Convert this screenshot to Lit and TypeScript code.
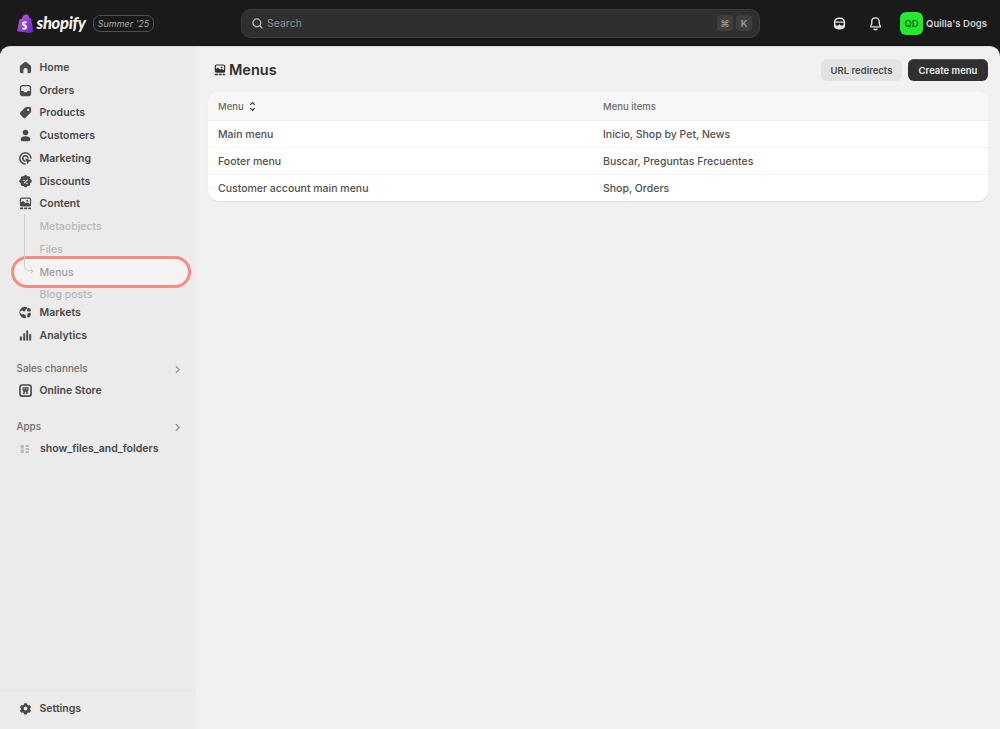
import { LitElement, html, css, svg } from "lit";
import { customElement } from "lit/decorators.js";

const icon = (body: unknown, cls = "ic") => html`<svg class=${cls} viewBox="0 0 20 20" aria-hidden="true">${body}</svg>`;

const contentIcon = svg`<path fill-rule="evenodd" d="M5 2h10a2.500 2.500 0 0 1 2.500 2.500v7A2.500 2.500 0 0 1 15 14H5a2.500 2.500 0 0 1-2.500-2.500v-7A2.500 2.500 0 0 1 5 2ZM4.200 4.500v3.900l2.600-1.900 3.400 3 1.800-1.300 3.800 2.300V4.500c0-.5-.4-.8-.8-.8H5c-.5 0-.8.3-.8.8Z"/><circle cx="12.400" cy="6.200" r="1.300"/><rect x="2.500" y="15.300" width="4.500" height="2.200" rx="1"/><rect x="8" y="15.300" width="4.500" height="2.200" rx="1"/><rect x="13.500" y="15.300" width="4" height="2.200" rx="1"/>`;

const icons: Record<string, unknown> = {
  home: svg`<path d="M8.600 2.900a2.200 2.200 0 0 1 2.800 0l5 4.100c.7.500 1.100 1.300 1.100 2.200v5.800a2.500 2.500 0 0 1-2.500 2.500h-2.200v-4.200a2.800 2.800 0 0 0-5.600 0v4.200H5A2.500 2.500 0 0 1 2.500 15V9.200c0-.9.400-1.700 1.100-2.200l5-4.100Z"/>`,
  orders: svg`<path fill-rule="evenodd" d="M6 2.500h8A3.500 3.500 0 0 1 17.500 6v8a3.500 3.500 0 0 1-3.500 3.500H6A3.500 3.500 0 0 1 2.500 14V6A3.500 3.500 0 0 1 6 2.500Zm0 1.800c-.9 0-1.700.8-1.700 1.700v4.700h2.500c.6 0 1 .3 1.300.8l.4.8h3l.4-.8c.3-.5.7-.8 1.300-.8h2.500V6c0-.9-.8-1.700-1.700-1.700H6Z"/>`,
  products: svg`<path fill-rule="evenodd" d="M11.700 2.500h3.800a2 2 0 0 1 2 2v3.800c0 .8-.3 1.500-.9 2.100l-6.300 6.300a2.400 2.400 0 0 1-3.400 0l-3.600-3.600a2.400 2.400 0 0 1 0-3.400l6.300-6.300c.6-.6 1.300-.9 2.100-.9ZM13.500 8a1.500 1.500 0 1 0 0-3 1.500 1.500 0 0 0 0 3Z"/>`,
  customers: svg`<circle cx="10" cy="6" r="3.700"/><path d="M10 11c-3.500 0-6.500 1.600-6.500 4.200 0 1.400 1.100 2.300 2.500 2.300h8c1.400 0 2.500-.9 2.500-2.300C16.500 12.600 13.500 11 10 11Z"/>`,
  marketing: svg`<path fill="none" stroke="currentColor" stroke-width="2" stroke-linecap="round" d="M9.500 17.200a7.400 7.400 0 1 1 7.700-7.700"/><path fill="none" stroke="currentColor" stroke-width="2" stroke-linecap="round" d="M9.200 13.300a3.500 3.500 0 1 1 4.100-4.100"/><path d="M9.500 9.500l8.500 3-3.500 1.800-1.800 3.700-3.200-8.500Z"/>`,
  discounts: svg`<path fill-rule="evenodd" d="M8.300 1.600a2.300 2.300 0 0 1 3.400 0l.9.9 1.300-.1a2.300 2.300 0 0 1 2.400 2.400l-.1 1.300 1.300 1c1.200 1.100 1.200 2.700 0 3.800l-1.300 1 .1 1.300a2.300 2.300 0 0 1-2.400 2.400l-1.300-.1-.9.900a2.300 2.300 0 0 1-3.400 0l-.9-.9-1.300.1a2.300 2.300 0 0 1-2.400-2.400l.1-1.300-1.300-1c-1.200-1.100-1.200-2.700 0-3.800l1.300-1-.1-1.300a2.300 2.300 0 0 1 2.400-2.400l1.300.1.900-.9ZM12.500 6.500l-5 5 1 1 5-5-1-1ZM8 9a1 1 0 1 0 0-2 1 1 0 0 0 0 2Zm4 4a1 1 0 1 0 0-2 1 1 0 0 0 0 2Z" transform="translate(0 .500)"/>`,
  content: contentIcon,
  markets: svg`<path d="M9.500 2.500a7.500 7.500 0 1 0 1 14.900v-2.600c0-.9-.5-1.500-1.200-1.800l-2.100-.9-2.400.3-2-2 .6-2.500 2.600-.7 1.600 1.300 1.900-.3.700-2.200 1.800-1.300.2-2c-.8-.2-1.700-.2-2.700-.2Z"/><path d="M13.800 3.800c1.800.5 3.500 1.800 3.500 3.200 0 1-.8 1.600-1.800 1.600h-2c-1 0-1.500-.7-1.400-1.700.1-1.800.6-3.300 1.700-3.100ZM14.700 10.500c1.600-.3 2.800.5 2.500 2-.4 2-1.900 4-3.500 4.200-1 .1-1.400-.6-1.400-1.500v-2c0-1.400.9-2.400 2.400-2.700Z"/>`,
  analytics: svg`<rect x="2.500" y="11" width="2.600" height="6" rx="1"/><rect x="7" y="7" width="2.600" height="10" rx="1"/><rect x="11" y="3" width="2.600" height="14" rx="1"/><rect x="15" y="8" width="2.600" height="9" rx="1"/>`,
  store: svg`<path fill-rule="evenodd" d="M5.500 1.500h9a4 4 0 0 1 4 4v9a4 4 0 0 1-4 4h-9a4 4 0 0 1-4-4v-9a4 4 0 0 1 4-4Zm.2 2.200c-1.100 0-2 .9-2 2v8.600c0 1.100.9 2 2 2h8.600c1.100 0 2-.9 2-2V5.700c0-1.100-.9-2-2-2H5.700Z"/><path fill-rule="evenodd" d="M6 5.500h8v4.800H13v4.200h-2v-3H9v3H7v-4.200H6V5.500Zm1.700 1.600v1.600h1.200V7.100H7.700Zm3.400 0v1.600h1.200V7.100h-1.200Z"/>`,
  settings: svg`<path fill-rule="evenodd" d="M8 2.500h4l.6 2.300 1.400.8 2.300-.6 2 3.500-1.700 1.500v1.600l1.700 1.500-2 3.500-2.300-.6-1.400.8-.6 2.300H8l-.6-2.300-1.400-.8-2.300.6-2-3.500 1.700-1.500v-1.600L1.700 8.500l2-3.500 2.300.6 1.400-.8L8 2.500ZM10 13a2.800 2.800 0 1 0 0-5.600 2.800 2.800 0 0 0 0 5.600Z" transform="translate(1 .800) scale(.9)"/>`,
};

const nav1 = [
  ["home", "Home"],
  ["orders", "Orders"],
  ["products", "Products"],
  ["customers", "Customers"],
  ["marketing", "Marketing"],
  ["discounts", "Discounts"],
  ["content", "Content"],
];
const subs = ["Metaobjects", "Files", "Menus", "Blog posts"];
const rows = [
  ["Main menu", "Inicio, Shop by Pet, News"],
  ["Footer menu", "Buscar, Preguntas Frecuentes"],
  ["Customer account main menu", "Shop, Orders"],
];

@customElement("app-root")
export class AppRoot extends LitElement {
  static styles = css`
    :host {
      display: block;
      width: 1000px;
      height: 729px;
      background: #1a1a1a;
      overflow: hidden;
      font-family: Inter, "Liberation Sans", sans-serif;
      font-size: 10.5px;
      font-weight: 500;
      color: #404040;
    }
    .top {
      height: 46px;
      display: flex;
      align-items: center;
      padding: 0 13px 0 17px;
      box-sizing: border-box;
      position: relative;
    }
    .brand { width: 224px; display: flex; align-items: center; flex: none; }
    .bag { width: 17px; height: 19px; flex: none; }
    .word {
      font-family: Lato, sans-serif;
      font-style: italic;
      font-weight: 900;
      font-size: 16.5px;
      letter-spacing: -0.3px;
      color: #f2f2f2;
      margin-left: 2.5px;
      width: 54px;
    }
    .badge {
      margin-left: 2.5px;
      width: 61px;
      height: 17px;
      box-sizing: border-box;
      border: 1px solid #4f4f4f;
      border-radius: 7px;
      display: flex;
      align-items: center;
      justify-content: center;
      font-style: italic;
      font-size: 9px;
      font-weight: 400;
      color: #a8a8a8;
    }
    .search {
      width: 519px;
      height: 29px;
      box-sizing: border-box;
      flex: none;
      background: #2f2f2f;
      border: 1px solid #3c3c3c;
      border-radius: 10px;
      display: flex;
      align-items: center;
      padding: 0 7px 0 9px;
      color: #8f8f8f;
      font-size: 10.5px;
      font-weight: 400;
      gap: 3px;
    }
    .search svg { width: 13px; height: 13px; color: #bdbdbd; }
    .search .lbl { flex: 1; }
    .kbds { display: flex; gap: 3px; }
    .kbd {
      width: 16px;
      height: 16px;
      border-radius: 4px;
      background: #3f3f3f;
      color: #9a9a9a;
      display: flex;
      align-items: center;
      justify-content: center;
      font-size: 9.5px;
      font-weight: 600;
    }
    .right { flex: 1; display: flex; align-items: center; color: #e3e3e3; }
    .right svg { width: 15px; height: 15px; color: #e3e3e3; flex: none; }
    .right .guy { margin-left: 72px; }
    .right .bell { margin-left: 21px; }
    .avatar {
      width: 23px;
      height: 23px;
      border-radius: 6px;
      background: #25e82f;
      color: #0f6b17;
      font-size: 9.5px;
      font-weight: 600;
      display: flex;
      align-items: center;
      justify-content: center;
      margin-left: 17px;
      flex: none;
    }
    .shop { margin-left: 3px; font-size: 9.6px; font-weight: 600; color: #cfcfcf; white-space: nowrap; }

    .body {
      height: 683px;
      display: flex;
      background: #f1f1f1;
      border-radius: 10px 10px 0 0;
      overflow: hidden;
      border-top: 1px solid #d8d8d8;
      box-sizing: border-box;
    }
    .side {
      width: 196px;
      flex: none;
      background: #ebebeb;
      display: flex;
      flex-direction: column;
      position: relative;
      padding-top: 9px;
      box-sizing: border-box;
    }
    .row {
      height: 22.75px;
      display: flex;
      align-items: center;
      padding-left: 17.5px;
      color: #484848;
      font-weight: 600;
      white-space: nowrap;
      position: relative;
    }
    .ic { width: 15px; height: 15px; fill: currentColor; color: #4a4a4a; flex: none; margin-right: 7px; }
    .row.sub { padding-left: 39.5px; color: #b8b8b8; font-weight: 500; }
    .subs { position: relative; margin-bottom: -5px; }
    .spine {
      position: absolute;
      left: 24px;
      top: -1px;
      width: 8px;
      height: 57px;
      border-left: 1px solid #cdcdcd;
      border-bottom: 1px solid #cdcdcd;
      border-bottom-left-radius: 5px;
      box-sizing: border-box;
      z-index: 1;
    }
    .arrow {
      position: absolute;
      left: 29px;
      top: 53.5px;
      width: 4px;
      height: 4px;
      box-sizing: border-box;
      border-top: 1px solid #cdcdcd;
      border-right: 1px solid #cdcdcd;
      transform: rotate(45deg);
      z-index: 1;
    }
    .ring {
      position: absolute;
      left: 10.5px;
      top: 209px;
      width: 180px;
      height: 31.5px;
      box-sizing: border-box;
      border: 3px solid #fa8a80;
      border-radius: 16px;
      background: #f3f3f3;
    }
    .sub.hl { z-index: 1; color: #a0a0a0; }
    .sect {
      height: 22px;
      display: flex;
      align-items: center;
      justify-content: space-between;
      padding: 0 13px 0 16.5px;
      font-size: 9.9px;
      color: #707070;
      font-weight: 500;
    }
    .sect svg { width: 11px; height: 11px; fill: none; stroke: #8a8a8a; stroke-width: 2; margin-top: 3px; }
    .gap1 { margin-top: 10.5px; }
    .gap2 { margin-top: 12.5px; }
    .ic.app { width: 10px; height: 10px; margin: 0 10px 0 2.5px; color: #bdbdbd; }
    .apps { margin-top: 1px; }
    .spacer { flex: 1; }
    .foot { border-top: 1px solid #e7e7e7; height: 39px; padding-bottom: 3px; box-sizing: border-box; display: flex; align-items: center; }
    .foot .row { width: 100%; }

    .main { flex: 1; padding: 12px 12px 0; box-sizing: border-box; min-width: 0; }
    .head { height: 22px; display: flex; align-items: center; }
    .head .ic { width: 14px; height: 14px; margin: 0 2px 0 5px; color: #303030; }
    .title { flex: 1; font-size: 14.5px; font-weight: 600; color: #2e2e2e; margin-top: -1.5px; }
    .btn {
      height: 22px;
      box-sizing: border-box;
      border-radius: 6px;
      display: flex;
      align-items: center;
      justify-content: center;
      font-size: 9.5px;
      font-weight: 600;
    }
    .b1 { width: 81px; background: #e3e3e3; color: #4a4a4a; margin-right: 6px; }
    .b2 { width: 80px; background: #303030; color: #ededed; box-shadow: inset 0 1px 0 #555; }
    .card {
      margin-top: 11px;
      background: #fff;
      border-radius: 10px;
      overflow: hidden;
      box-shadow: 0 1px 1px rgba(0,0,0,.09);
    }
    .tr { display: grid; grid-template-columns: 385px 1fr; padding-left: 10px; align-items: center; height: 27px; border-bottom: 1px solid #f3f3f3; box-sizing: border-box; color: #505050; }
    .th { height: 29px; background: #f7f7f7; border-bottom: 1px solid #ececec; color: #6b6b6b; font-size: 9.5px; }
    .tr.last { height: 26px; border-bottom: none; }
    .th .m { display: flex; align-items: center; gap: 3px; }
    .th svg { width: 11px; height: 11px; fill: none; stroke: #303030; stroke-width: 2; }
  `;

  render() {
    const row = (ic: string, label: string) =>
      html`<div class="row">${icon(icons[ic])}<span>${label}</span></div>`;
    return html`
      <div class="top">
        <div class="brand">
          <svg class="bag" viewBox="0 0 17 19" aria-hidden="true">
            <defs><linearGradient id="g" x1="0" y1="0" x2="1" y2="1"><stop offset="0" stop-color="#c65fe0"/><stop offset="1" stop-color="#5f25c0"/></linearGradient></defs>
            <path fill="url(#g)" d="M11.500 1.600 10.600 1C9.800.3 8.600-.1 7.300 1 6 2 5.300 3.500 4.900 4.800L2.500 5.500 0 17.200 12.500 19 16.500 18 14 4.300l-1.500-.2c-.2-1-.5-1.900-1-2.500Z"/>
            <path fill="#fff" d="M9.700 7.800c-.6-.3-1.300-.4-2-.3-1.700.1-2.700 1.200-2.700 2.500 0 2 3 2.100 3 3.200 0 .5-.4.8-1 .8-.8 0-1.700-.5-1.700-.5l-.4 1.500s.9.700 2.300.6c1.700-.1 2.800-1.200 2.800-2.700 0-2.200-3-2.200-3-3.100 0-.3.300-.6 1-.6.600 0 1.200.2 1.200.2l.5-1.600Z"/>
          </svg>
          <span class="word">shopify</span>
          <span class="badge">Summer '25</span>
        </div>
        <div class="search">
          <svg viewBox="0 0 20 20" fill="none" stroke="currentColor" stroke-width="2" stroke-linecap="round" aria-hidden="true"><circle cx="9" cy="9" r="6"/><path d="m13.500 13.500 3.500 3.500"/></svg>
          <span class="lbl">Search</span>
          <span class="kbds"><span class="kbd">⌘</span><span class="kbd">K</span></span>
        </div>
        <div class="right">
          <svg class="guy" viewBox="0 0 20 20" aria-hidden="true"><path fill="currentColor" fill-rule="evenodd" d="M10 2c4.500 0 7.500 2 7.500 7v3.500c0 3.500-3 5.500-7.500 5.500s-7.500-2-7.500-5.500V9c0-5 3-7 7.500-7ZM4.500 7.200h11C15 5 13 4 10 4S5 5 4.500 7.200ZM4.500 9v1.200c0 1.600 1 2.600 2.600 2.600 1.300 0 2.200-.7 2.400-1.700h1c.2 1 1.100 1.700 2.400 1.700 1.600 0 2.600-1 2.600-2.600V9h-11Z"/></svg>
          <svg class="bell" viewBox="0 0 20 20" aria-hidden="true"><path fill="none" stroke="currentColor" stroke-width="1.800" stroke-linejoin="round" d="M10 2.500c-3 0-5 2.200-5 5v2.500c0 1.200-.5 2-1.500 3.500-.3.500 0 1 .5 1h12c.5 0 .8-.5.500-1-1-1.500-1.500-2.300-1.500-3.500V7.500c0-2.800-2-5-5-5Z"/><path fill="none" stroke="currentColor" stroke-width="1.800" stroke-linecap="round" d="M8 17.500c1 .8 3 .8 4 0"/></svg>
          <span class="avatar">QD</span>
          <span class="shop">Quilla's Dogs</span>
        </div>
      </div>
      <div class="body">
        <aside class="side">
          <div class="ring"></div>
          ${nav1.map(([i, l]) => row(i, l))}
          <div class="subs">
            <div class="spine"></div>
            <div class="arrow"></div>
            ${subs.map((s) => html`<div class="row sub ${s === "Menus" ? "hl" : ""}">${s}</div>`)}
          </div>
          ${row("markets", "Markets")}
          ${row("analytics", "Analytics")}
          <div class="sect gap1"><span>Sales channels</span><svg viewBox="0 0 20 20"><path d="m7 4 6 6-6 6"/></svg></div>
          ${row("store", "Online Store")}
          <div class="sect gap2"><span>Apps</span><svg viewBox="0 0 20 20"><path d="m7 4 6 6-6 6"/></svg></div>
          <div class="row apps">
            <svg class="ic app" viewBox="0 0 20 20" aria-hidden="true"><rect x="1" y="2" width="7" height="7"/><rect x="1" y="11" width="7" height="7"/><rect x="11" y="2" width="7" height="4"/><rect x="11" y="8" width="7" height="4"/><rect x="11" y="14" width="7" height="4"/></svg>
            <span>show_files_and_folders</span>
          </div>
          <div class="spacer"></div>
          <div class="foot">${row("settings", "Settings")}</div>
        </aside>
        <main class="main">
          <div class="head">
            ${icon(icons.content)}
            <span class="title">Menus</span>
            <span class="btn b1">URL redirects</span>
            <span class="btn b2">Create menu</span>
          </div>
          <div class="card">
            <div class="tr th">
              <span class="m">Menu <svg viewBox="0 0 20 20"><path d="m6 7 4-4 4 4M6 13l4 4 4-4"/></svg></span>
              <span>Menu items</span>
            </div>
            ${rows.map(([a, b], i) => html`<div class="tr ${i === 2 ? "last" : ""}"><span>${a}</span><span>${b}</span></div>`)}
          </div>
        </main>
      </div>
    `;
  }
}
